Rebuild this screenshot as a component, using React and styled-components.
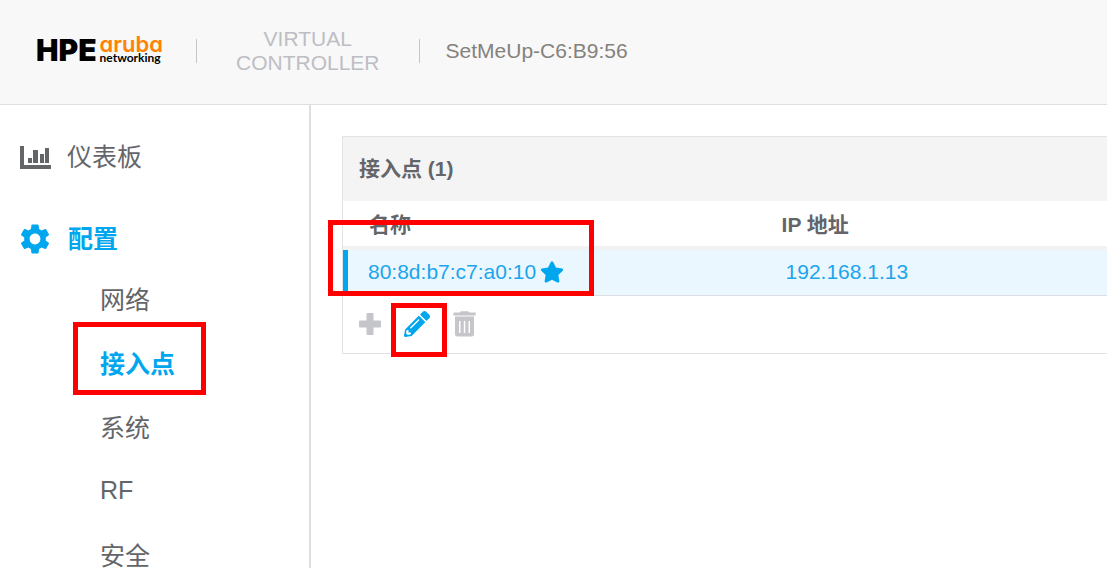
import styled, { createGlobalStyle } from 'styled-components';
import { FaPencilAlt, FaStar } from 'react-icons/fa';
import { MdSettings } from 'react-icons/md';

const subItems = ['网络', '接入点', '系统', 'RF', '安全'];
const accessPoints = [{ name: '80:8d:b7:c7:a0:10', ip: '192.168.1.13' }];

const ChartIcon = () => (
  <svg width="32" height="24" viewBox="0 0 32 24" fill="currentColor" aria-hidden="true">
    <path d="M0 1h4v19h27v4H0zM8 13h4v5H8zM13 5h5v13h-5zM20 9h4v9h-4zM25 3h4v15h-4z" />
  </svg>
);

const PlusIcon = () => (
  <svg width="24" height="24" viewBox="0 0 24 24" fill="currentColor" aria-hidden="true">
    <path d="M9.500 1h5a1 1 0 0 1 1 1v6.500H22a1 1 0 0 1 1 1v5a1 1 0 0 1-1 1h-6.500V22a1 1 0 0 1-1 1h-5a1 1 0 0 1-1-1v-6.500H2a1 1 0 0 1-1-1v-5a1 1 0 0 1 1-1h6.500V2a1 1 0 0 1 1-1z" />
  </svg>
);

const TrashIcon = () => (
  <svg width="24" height="26" viewBox="0 0 24 26" fill="currentColor" aria-hidden="true">
    <path d="M2 1.500H7.500L9 .3h7L17.500 1.500H23a.6.6 0 0 1 .6.600v2.300H1.400V2.100a.6.6 0 0 1 .6-.6z" />
    <path
      fillRule="evenodd"
      d="M3 5.600h19V23a2.500 2.500 0 0 1-2.500 2.500h-14A2.500 2.500 0 0 1 3 23zM7 10v12h1.500V10zM11.800 10v12h1.500V10zM16.500 10v12H18V10z"
    />
  </svg>
);

const App = () => (
  <Page>
    <GlobalStyle />
    <Header>
      <Logo href="#" aria-label="HPE aruba networking">
        <Hpe>HPE</Hpe>
        <Brand>
          <Aruba>aruba</Aruba>
          <Networking>networking</Networking>
        </Brand>
      </Logo>
      <Divider />
      <Product>
        VIRTUAL
        <br />
        CONTROLLER
      </Product>
      <Divider />
      <Controller>SetMeUp-C6:B9:56</Controller>
    </Header>

    <Body>
      <Sidebar>
        <MainLink href="#dashboard">
          <ChartIcon />
          <Label>仪表板</Label>
        </MainLink>
        <MainLink href="#config" $active>
          <MdSettings size={36} />
          <Label>配置</Label>
        </MainLink>
        <SubMenu>
          {subItems.map((item) => (
            <SubItem key={item}>
              <SubLink href={`#${item}`} $active={item === '接入点'}>
                <Label>{item}</Label>
              </SubLink>
              {item === '接入点' && <MenuMark />}
            </SubItem>
          ))}
        </SubMenu>
      </Sidebar>

      <Main>
        <Panel>
          <PanelTitle>接入点 (1)</PanelTitle>
          <Table>
            <thead>
              <tr>
                <HeadCell $first>名称</HeadCell>
                <HeadCell>IP 地址</HeadCell>
              </tr>
            </thead>
            <tbody>
              {accessPoints.map((ap) => (
                <tr key={ap.name}>
                  <Cell $first>
                    <Name>
                      {ap.name}
                      <FaStar size={24} />
                    </Name>
                    <RowMark />
                  </Cell>
                  <Cell>{ap.ip}</Cell>
                </tr>
              ))}
            </tbody>
          </Table>
          <Toolbar>
            <ToolButton aria-label="添加" disabled>
              <PlusIcon />
            </ToolButton>
            <ToolButton aria-label="编辑">
              <FaPencilAlt size={26} />
              <ButtonMark />
            </ToolButton>
            <ToolButton aria-label="删除" disabled>
              <TrashIcon />
            </ToolButton>
          </Toolbar>
        </Panel>
      </Main>
    </Body>
  </Page>
);

export default App;

const GlobalStyle = createGlobalStyle`
  * {
    box-sizing: border-box;
  }

  body {
    margin: 0;
    background: #fff;
    color: #646569;
    font-family: 'Liberation Sans', 'Noto Sans CJK SC', sans-serif;
    font-size: 21px;
  }
`;

const Page = styled.div`
  display: flex;
  flex-direction: column;
  height: 100vh;
  overflow: hidden;
`;

const Header = styled.header`
  display: flex;
  align-items: center;
  flex-shrink: 0;
  height: 105px;
  padding: 0 36px 2px;
  background: #f8f8f8;
  border-bottom: 1px solid #dedfe3;
`;

const Logo = styled.a`
  display: flex;
  align-items: center;
  gap: 3px;
  width: 124px;
  margin-right: 36px;
  padding-bottom: 2px;
  color: #000;
  text-decoration: none;
  font-family: Inter, sans-serif;
`;

const Hpe = styled.span`
  font-size: 30px;
  line-height: 30px;
  font-weight: 900;
`;

const Brand = styled.span`
  display: flex;
  flex-direction: column;
`;

const Aruba = styled.span`
  color: #ff8300;
  font-size: 22px;
  line-height: 16px;
  font-weight: 600;
  font-feature-settings: 'cv11';
`;

const Networking = styled.span`
  font-family: Lato, sans-serif;
  font-size: 12px;
  line-height: 12px;
  font-weight: 700;
`;

const Divider = styled.span`
  width: 1px;
  height: 24px;
  background: #c4c5ca;
`;

const Product = styled.span`
  margin: 0 39px;
  color: #bdbec4;
  font-size: 21px;
  line-height: 24px;
  text-align: center;
`;

const Controller = styled.span`
  margin-left: 26px;
  color: #85827c;
`;

const Body = styled.div`
  display: flex;
  flex: 1;
  min-height: 0;
`;

const Sidebar = styled.nav`
  flex: 0 0 311px;
  padding-top: 23px;
  border-right: 2px solid #dedfe3;
  overflow: hidden;
`;

const MainLink = styled.a`
  display: flex;
  align-items: center;
  gap: 15px;
  height: 58px;
  margin-bottom: ${({ $active }) => ($active ? '0' : '24px')};
  padding-left: ${({ $active }) => ($active ? '17px' : '20px')};
  color: ${({ $active }) => ($active ? '#01a7ee' : '#646569')};
  font-size: 25px;
  font-weight: ${({ $active }) => ($active ? 700 : 400)};
  text-decoration: none;
`;

const Label = styled.span`
  padding-bottom: 4px;
`;

const SubMenu = styled.ul`
  margin: 0;
  padding: 0;
  list-style: none;
`;

const SubItem = styled.li`
  position: relative;
`;

const SubLink = styled.a`
  display: flex;
  align-items: center;
  height: 64px;
  padding-left: 100px;
  color: ${({ $active }) => ($active ? '#01a7ee' : '#646569')};
  font-size: 25px;
  font-weight: ${({ $active }) => ($active ? 700 : 400)};
  text-decoration: none;
`;

const Mark = styled.span`
  position: absolute;
  z-index: 1;
  border: 5px solid #f00;
  pointer-events: none;
`;

const MenuMark = styled(Mark)`
  top: -10px;
  left: 73px;
  width: 133px;
  height: 73px;
`;

const RowMark = styled(Mark)`
  top: -30px;
  left: -20px;
  width: 266px;
  height: 76px;
`;

const ButtonMark = styled(Mark)`
  top: -8px;
  left: -13px;
  width: 56px;
  height: 54px;
`;

const Main = styled.main`
  flex: 1;
  min-width: 0;
  padding: 31px 0 0 31px;
`;

const Panel = styled.section`
  border: 1px solid #e3e3e5;
  border-right: 0;
`;

const PanelTitle = styled.h2`
  display: flex;
  align-items: center;
  height: 64px;
  margin: 0;
  padding: 0 0 4px 16px;
  background: #f4f4f4;
  font-size: 21px;
  font-weight: 700;
`;

const Table = styled.table`
  width: 100%;
  border-collapse: separate;
  border-spacing: 0;
  table-layout: fixed;
`;

const HeadCell = styled.th`
  width: ${({ $first }) => ($first ? '54%' : 'auto')};
  height: 49px;
  padding: 0 0 2px 26px;
  border-bottom: 4px solid #f2f2f2;
  font-size: 21px;
  font-weight: 700;
  text-align: left;
`;

const Cell = styled.td`
  position: relative;
  height: 46px;
  padding: 0 0 2px ${({ $first }) => ($first ? '20px' : '30px')};
  border-left: ${({ $first }) => ($first ? '5px solid #01a7ee' : '0')};
  border-bottom: 1px solid #dedfe3;
  background: #ebf7fe;
  color: #1ba5ed;

  svg {
    color: #01a7ee;
  }
`;

const Name = styled.span`
  display: flex;
  align-items: center;
  gap: 4px;
`;

const Toolbar = styled.div`
  display: flex;
  align-items: center;
  gap: 21px;
  height: 57px;
  padding: 0 0 2px 14px;
`;

const ToolButton = styled.button`
  position: relative;
  display: flex;
  align-items: center;
  justify-content: center;
  width: 26px;
  height: 26px;
  padding: 0;
  border: 0;
  background: none;
  color: #01a7ee;

  &:disabled {
    color: #c5c6ca;
  }
`;
